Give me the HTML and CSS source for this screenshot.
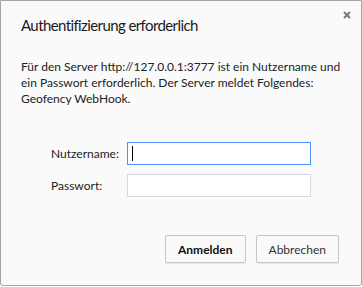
FILE: index.html
```html
<!DOCTYPE html>
<html lang="de">
<head>
  <meta charset="UTF-8">
  <title>Authentifizierung erforderlich</title>
  <link rel="stylesheet" href="styles.css">
</head>
<body>

<div class="dialog">
  <div class="dialog-head">
    <h1>Authentifizierung erforderlich</h1>
    <button class="close-btn" aria-label="Schließen">
      <svg width="8" height="8" viewBox="0 0 8 8">
        <path d="M1 1 L7 7 M7 1 L1 7" stroke="#7a7a7a" stroke-width="2"/>
      </svg>
    </button>
  </div>

  <p class="message">
    Für den Server http://127.0.0.1:3777 ist ein Nutzername und ein Passwort erforderlich. Der Server meldet Folgendes: Geofency WebHook.
  </p>

  <div class="form">
    <label for="user">Nutzername:</label>
    <div class="field focused" id="user"><span class="caret"></span></div>
    <label for="pass">Passwort:</label>
    <div class="field" id="pass"></div>
  </div>

  <div class="actions">
    <button class="btn btn-primary">Anmelden</button>
    <button class="btn">Abbrechen</button>
  </div>
</div>

</body>
</html>
```

FILE: styles.css
```css
* {
  box-sizing: border-box;
}

body {
  margin: 0;
  width: 362px;
  height: 287px;
  background: #fff;
  font-family: Lato, 'Noto Sans', sans-serif;
  color: #222;
}

.dialog {
  width: 362px;
  height: 286px;
  background: #fafafa;
  border: 1px solid #a6a6a6;
  border-radius: 0 0 3px 3px;
  display: flex;
  flex-direction: column;
}

.dialog-head {
  display: flex;
  justify-content: space-between;
  align-items: flex-start;
  padding: 12px 10px 0 20px;
}

h1 {
  margin: 0;
  font-size: 15px;
  font-weight: normal;
  letter-spacing: -0.6px;
  line-height: 24px;
  color: #1a1a1a;
}

.close-btn {
  border: none;
  background: none;
  padding: 0;
  margin-top: -2px;
  cursor: pointer;
  display: flex;
}

.message {
  margin: 22px 16px 0 20px;
  font-size: 12px;
  line-height: 16px;
  color: #222;
}

.form {
  display: grid;
  grid-template-columns: 76px 184px;
  row-gap: 9px;
  align-items: center;
  margin: 35px 0 0 50px;
}

.form label {
  font-size: 12px;
  color: #222;
}

.field {
  height: 23px;
  background: #fff;
  border: 1px solid #d9d9d9;
  display: flex;
  align-items: center;
  padding-left: 4px;
}

.field.focused {
  border-color: #4d90fe;
}

.caret {
  width: 1px;
  height: 15px;
  background: #000;
}

.actions {
  display: flex;
  justify-content: flex-end;
  gap: 10px;
  margin-top: auto;
  padding: 0 22px 22px 0;
}

.btn {
  height: 28px;
  min-width: 80px;
  padding: 0 12px;
  font-family: Lato, 'Noto Sans', sans-serif;
  font-size: 12px;
  color: #333;
  background: #f9f9f9;
  border: 1px solid #c6c6c6;
  border-radius: 2px;
  box-shadow: 0 1px 0 rgba(0, 0, 0, 0.08);
}

.btn-primary {
  font-weight: bold;
  color: #111;
}
```
